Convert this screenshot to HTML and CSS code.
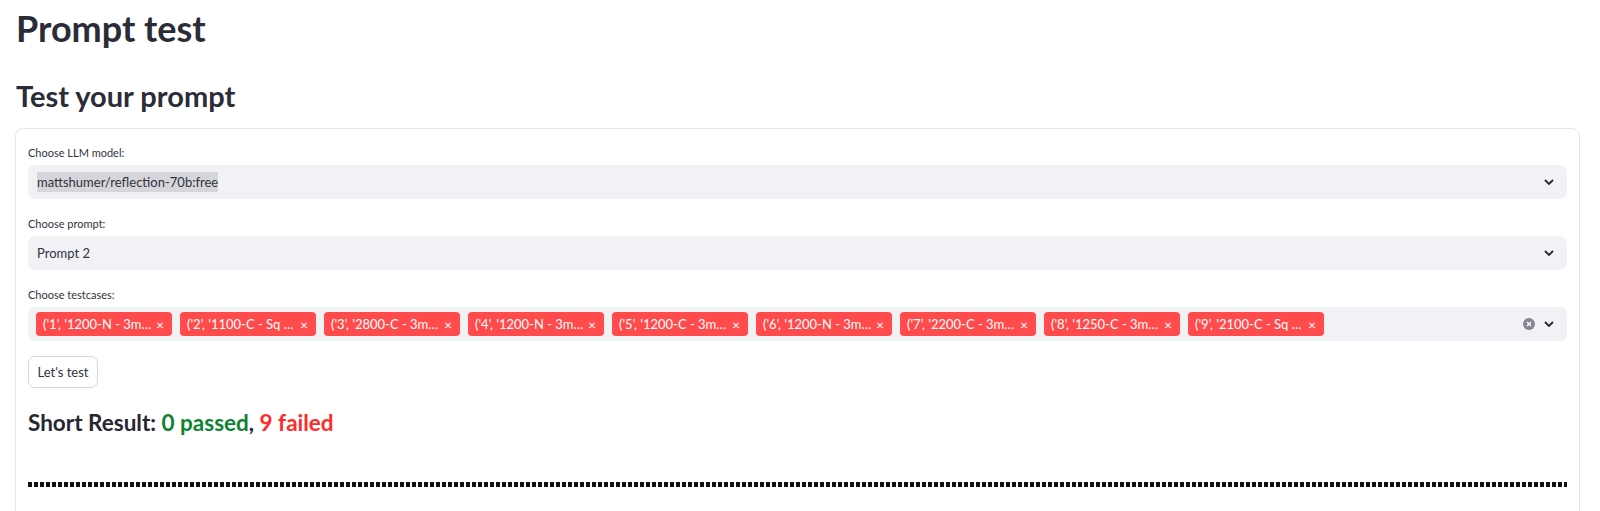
FILE: index.html
```html
<!DOCTYPE html>
<html lang="en">
<head>
    <meta charset="UTF-8">
    <meta name="viewport" content="width=device-width, initial-scale=1.0">
    <title>Prompt test</title>
    <link rel="stylesheet" href="styles.css">
</head>
<body>
    <h1 class="title">Prompt test</h1>
    <h2 class="subtitle">Test your prompt</h2>

    <div class="form-card">
        <div class="field">
            <label class="field-label">Choose LLM model:</label>
            <div class="select-box">
                <span class="select-value"><span class="picked">mattshumer/reflection-70b:free</span></span>
                <div class="select-icons">
                    <svg class="chevron" width="10" height="6" viewBox="0 0 10 6"><path d="M1 1 L5 5 L9 1" /></svg>
                </div>
            </div>
        </div>

        <div class="field">
            <label class="field-label">Choose prompt:</label>
            <div class="select-box">
                <span class="select-value">Prompt 2</span>
                <div class="select-icons">
                    <svg class="chevron" width="10" height="6" viewBox="0 0 10 6"><path d="M1 1 L5 5 L9 1" /></svg>
                </div>
            </div>
        </div>

        <div class="field">
            <label class="field-label">Choose testcases:</label>
            <div class="select-box multi">
                <div class="tags">
                    <span class="tag"><span class="tag-text">('1', '1200-N - 3m…</span><span class="tag-close">×</span></span>
                    <span class="tag"><span class="tag-text">('2', '1100-C - Sq …</span><span class="tag-close">×</span></span>
                    <span class="tag"><span class="tag-text">('3', '2800-C - 3m…</span><span class="tag-close">×</span></span>
                    <span class="tag"><span class="tag-text">('4', '1200-N - 3m…</span><span class="tag-close">×</span></span>
                    <span class="tag"><span class="tag-text">('5', '1200-C - 3m…</span><span class="tag-close">×</span></span>
                    <span class="tag"><span class="tag-text">('6', '1200-N - 3m…</span><span class="tag-close">×</span></span>
                    <span class="tag"><span class="tag-text">('7', '2200-C - 3m…</span><span class="tag-close">×</span></span>
                    <span class="tag"><span class="tag-text">('8', '1250-C - 3m…</span><span class="tag-close">×</span></span>
                    <span class="tag"><span class="tag-text">('9', '2100-C - Sq …</span><span class="tag-close">×</span></span>
                </div>
                <div class="select-icons">
                    <svg class="clear" width="12" height="12" viewBox="0 0 12 12">
                        <circle cx="6" cy="6" r="6" />
                        <path d="M4 4 L8 8 M8 4 L4 8" />
                    </svg>
                    <svg class="chevron" width="10" height="6" viewBox="0 0 10 6"><path d="M1 1 L5 5 L9 1" /></svg>
                </div>
            </div>
        </div>

        <button type="button" class="test-button">Let's test</button>

        <p class="short-result">Short Result: <span class="passed">0 passed</span>, <span class="failed">9 failed</span></p>

        <div class="dots"></div>
    </div>
</body>
</html>
```

FILE: styles.css
```css
html {
    overflow: hidden;
}
body {
    font-family: Lato, "Noto Sans", sans-serif;
    color: #31333f;
    margin: 0;
    padding: 0 20px 0 15px;
    background-color: #fff;
}
.title {
    font-size: 36px;
    line-height: 44px;
    font-weight: 700;
    margin: 6px 0 0 1px;
    color: #2b2c38;
}
.subtitle {
    font-size: 29px;
    line-height: 34px;
    font-weight: 700;
    margin: 29px 0 0 1px;
    color: #2b2c38;
}
.form-card {
    margin-top: 15px;
    border: 1px solid #e6e7ea;
    border-radius: 8px;
    padding: 16px 12px 60px;
    min-height: 400px;
}
.field + .field {
    margin-top: 17px;
}
.field-label {
    display: block;
    font-size: 11px;
    line-height: 16px;
    margin-bottom: 4px;
}
.select-box {
    display: flex;
    align-items: center;
    height: 34px;
    background-color: #f0f2f6;
    border-radius: 7px;
    padding: 0 13px 0 9px;
}
.select-box.multi {
    padding-left: 8px;
}
.select-value {
    flex: 1;
    font-size: 13px;
}
.picked {
    background-color: #d6d6da;
    padding: 2px 0;
}
.select-icons {
    display: flex;
    align-items: center;
    gap: 9px;
}
.chevron path {
    fill: none;
    stroke: #262730;
    stroke-width: 1.8;
}
.clear circle {
    fill: #85868f;
}
.clear path {
    stroke: #fff;
    stroke-width: 1.4;
}
.tags {
    flex: 1;
    display: flex;
    gap: 8px;
}
.tag {
    display: flex;
    align-items: center;
    justify-content: space-between;
    width: 136px;
    height: 24px;
    box-sizing: border-box;
    padding: 0 8px 0 7px;
    background-color: #ff4b4b;
    border-radius: 4px;
    color: #fff;
    font-size: 13px;
    white-space: nowrap;
}
.tag-close {
    font-size: 14px;
}
.test-button {
    display: block;
    margin-top: 15px;
    height: 32px;
    width: 70px;
    padding: 0;
    background-color: #fff;
    border: 1px solid #d5d6da;
    border-radius: 7px;
    font-family: inherit;
    font-size: 13px;
    color: #31333f;
}
.short-result {
    margin: 20px 0 0;
    font-size: 22.5px;
    line-height: 30px;
    font-weight: 700;
    color: #262730;
}
.passed {
    color: #0d8432;
}
.failed {
    color: #ff2b2b;
}
.dots {
    margin-top: 44px;
    height: 5px;
    background-image: repeating-linear-gradient(to right, #111 0, #111 4px, transparent 4px, transparent 6px);
}
```
